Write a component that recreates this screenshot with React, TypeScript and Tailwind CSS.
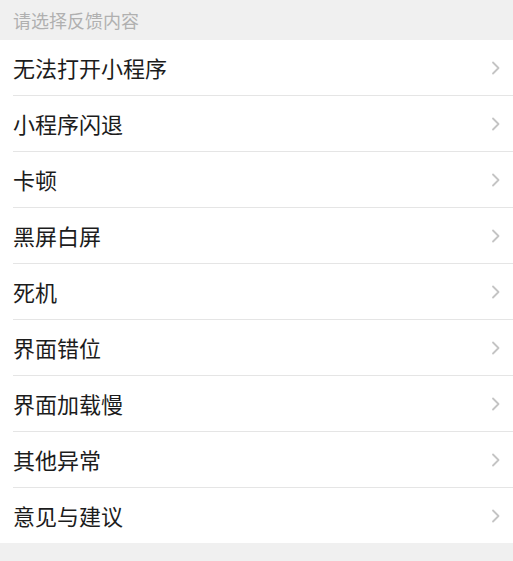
import React from "react";

const items = [
  "无法打开小程序",
  "小程序闪退",
  "卡顿",
  "黑屏白屏",
  "死机",
  "界面错位",
  "界面加载慢",
  "其他异常",
  "意见与建议",
];

const Chevron = () => (
  <svg width="10" height="14" viewBox="0 0 10 14" fill="none" className="shrink-0">
    <path d="M2 1.5 L7.5 7 L2 12.5" stroke="#c4c4c4" strokeWidth="1.8" strokeLinecap="round" strokeLinejoin="round" />
  </svg>
);

export default function App() {
  return (
    <div
      className="min-h-[561px] w-full bg-[#f0f0f0]"
      style={{ fontFamily: '"Noto Sans CJK SC", "Noto Sans", sans-serif' }}
    >
      <div className="flex h-[40px] items-center px-[13px] text-[18px] text-[#b0b0b0]">
        请选择反馈内容
      </div>

      <div className="bg-white">
        {items.map((label, i) => (
          <div key={label} className="pl-[13px]">
            <div
              className={
                "flex items-center justify-between pr-[12px] " +
                (i < items.length - 1 ? "h-[56px] border-b border-[#e5e5e5]" : "h-[55px]")
              }
            >
              <span className="text-[22px] text-[#1c1c1c]">{label}</span>
              <Chevron />
            </div>
          </div>
        ))}
      </div>
    </div>
  );
}
